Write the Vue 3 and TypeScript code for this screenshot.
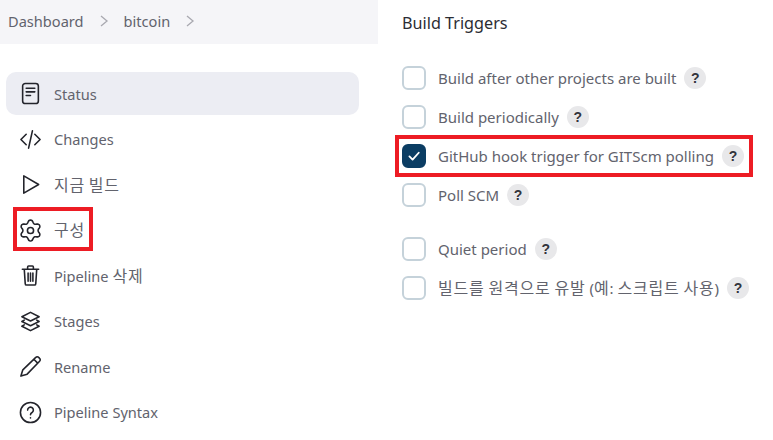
<template>
  <div class="page">
    <!-- left side: breadcrumb and task list -->
    <aside class="side">
      <div class="crumbs">
        <span>Dashboard</span>
        <svg class="sep" viewBox="0 0 10 14"><path d="M2 2l6 5-6 5" /></svg>
        <span>bitcoin</span>
        <svg class="sep" viewBox="0 0 10 14"><path d="M2 2l6 5-6 5" /></svg>
      </div>
      <nav class="tasks">
        <a v-for="t in tasks" :key="t.label" class="task" :class="{ active: t.active, marked: t.marked }">
          <svg class="ico" viewBox="0 0 24 24" v-html="t.icon"></svg>
          <span class="txt">
            <span v-for="(p, i) in pieces(t.label)" :key="i" :class="{ ko: p.ko }">{{ p.text }}</span>
          </span>
        </a>
      </nav>
    </aside>

    <main class="main">
      <h2 class="title">Build Triggers</h2>
      <div class="opts">
        <div v-for="o in options" :key="o.label" class="opt" :class="{ marked: o.checked, gap: o.gap }">
          <span class="box" :class="{ on: o.checked }">
            <svg v-if="o.checked" viewBox="0 0 24 24"><path d="M6.5 12.5l3.8 3.8 7.4-8.2" /></svg>
          </span>
          <span class="txt">
            <span v-for="(p, i) in pieces(o.label)" :key="i" :class="{ ko: p.ko }">{{ p.text }}</span>
          </span>
          <span class="help">?</span>
        </div>
      </div>
    </main>
  </div>
</template>

<script setup lang="ts">
interface Task {
  label: string
  icon: string
  active?: boolean
  marked?: boolean
}

interface Option {
  label: string
  checked?: boolean
  gap?: boolean
}

// hangul runs get their own size, the reference font sets them wider
function pieces(label: string) {
  return label
    .split(/([\uac00-\ud7a3]+)/)
    .filter((s) => s !== '')
    .map((s) => ({ text: s, ko: /[\uac00-\ud7a3]/.test(s) }))
}

// six lobed gear outline
function gearPath(): string {
  const pts: string[] = []
  for (let i = 0; i < 72; i++) {
    const a = (i / 72) * Math.PI * 2
    const wave = Math.cos(a * 6)
    const r = 9.4 + 1.5 * Math.sign(wave) * Math.pow(Math.abs(wave), 0.7)
    const x = 12 + r * Math.sin(a)
    const y = 12 - r * Math.cos(a)
    pts.push(x.toFixed(2) + ' ' + y.toFixed(2))
  }
  return 'M' + pts.join('L') + 'Z'
}

const tasks: Task[] = [
  {
    label: 'Status',
    active: true,
    icon: '<rect x="3.800" y="1.500" width="16.400" height="21" rx="2.800"/><path d="M7.500 6.500h9M7.500 10.300h9M7.500 14h4.500"/>'
  },
  { label: 'Changes', icon: '<path d="M7.5 6.5L2 12l5.5 5.5M16.5 6.5L22 12l-5.5 5.5M14 3L10 21"/>' },
  { label: '지금 빌드', icon: '<path d="M5 3v18l15.500-9z"/>' },
  {
    label: '구성',
    marked: true,
    icon: '<circle cx="12" cy="12" r="3.200"/><path d="' + gearPath() + '"/>'
  },
  {
    label: 'Pipeline 삭제',
    icon: '<path d="M3.500 5.500h17M9 5.500V3a1 1 0 0 1 1-1h4a1 1 0 0 1 1 1v2.500M5.500 5.500l1 15a1.500 1.500 0 0 0 1.500 1.500h8a1.500 1.500 0 0 0 1.500-1.500l1-15M9.500 9.500v8.500M12 9.500v8.500M14.500 9.500v8.500"/>'
  },
  {
    label: 'Stages',
    icon: '<path d="M12 2.500l9 4.500-9 4.500-9-4.500zM5.500 10.500L3 12l9 4.500L21 12l-2.500-1.500M5.500 15.500L3 17l9 4.500 9-4.500-2.500-1.500"/>'
  },
  {
    label: 'Rename',
    icon: '<path d="M2 22l2-6.500L17.500 2.500a2 2 0 0 1 3 0l1 1a2 2 0 0 1 0 3L8.500 20zM15.500 4.500l4 4"/>'
  },
  {
    label: 'Pipeline Syntax',
    icon: '<circle cx="12" cy="12" r="10.500"/><path d="M9 9.500a3 3 0 1 1 4.600 2.500c-1 .6-1.600 1.200-1.600 2.300"/><path d="M12 17.600v.1"/>'
  }
]

const options: Option[] = [
  { label: 'Build after other projects are built' },
  { label: 'Build periodically' },
  { label: 'GitHub hook trigger for GITScm polling', checked: true },
  { label: 'Poll SCM' },
  { label: 'Quiet period', gap: true },
  { label: '빌드를 원격으로 유발 (예: 스크립트 사용)' }
]
</script>

<style>
body {
  background: #fff;
}
</style>

<style scoped>
.page {
  display: flex;
  width: 773px;
  height: 440px;
  overflow: hidden;
  font-family: "Noto Sans", "Noto Sans CJK KR", sans-serif;
  font-size: 14.6px;
  color: #62636d;
}

.txt {
  line-height: 20px;
}

.ko {
  font-size: 16px;
  line-height: 1;
  letter-spacing: 0.8px;
}

.side {
  width: 378px;
  flex-shrink: 0;
}

.crumbs {
  display: flex;
  align-items: center;
  height: 44px;
  padding-left: 8px;
  padding-bottom: 3px;
  box-sizing: border-box;
  background: #f5f5f8;
}

.sep {
  width: 10px;
  height: 14px;
  margin: 0 15px;
  fill: none;
  stroke: #a9a9b0;
  stroke-width: 1.3;
}

.tasks {
  display: flex;
  flex-direction: column;
  gap: 2.500px;
  width: 353px;
  margin: 28px 0 0 6px;
}

.task {
  position: relative;
  display: flex;
  align-items: center;
  gap: 12px;
  height: 43px;
  padding-left: 13px;
  border-radius: 10px;
}

.task.active {
  background: #ecedf3;
}

.task.marked::after {
  content: "";
  position: absolute;
  left: 7px;
  top: -2px;
  width: 72px;
  height: 36px;
  border: 4px solid #ed1c24;
}

.ico {
  width: 23px;
  height: 23px;
  flex-shrink: 0;
  fill: none;
  stroke: #23242b;
  stroke-width: 1.650;
  stroke-linecap: round;
  stroke-linejoin: round;
}

.main {
  flex: 1;
  padding: 13px 0 0 24px;
}

.title {
  margin: 0 0 33px;
  font-size: 16.200px;
  font-weight: 400;
  line-height: 20px;
  color: #2b2c33;
}

.opts {
  display: flex;
  flex-direction: column;
  gap: 15px;
}

.opt {
  position: relative;
  display: flex;
  align-items: center;
  height: 24px;
  font-size: 15px;
}

.opt.gap {
  margin-top: 15px;
}

.opt.marked::after {
  content: "";
  position: absolute;
  left: -7px;
  top: -9px;
  width: 350px;
  height: 34px;
  border: 4px solid #ed1c24;
}

.box {
  display: flex;
  align-items: center;
  justify-content: center;
  width: 24px;
  height: 24px;
  box-sizing: border-box;
  margin-right: 12px;
  border: 2px solid #c5d2da;
  border-radius: 6px;
}

.box.on {
  border-color: #0b3d63;
  background: #0b3d63;
}

.box svg {
  width: 20px;
  height: 20px;
  fill: none;
  stroke: #fff;
  stroke-width: 2.200;
  stroke-linecap: round;
  stroke-linejoin: round;
}

.help {
  display: flex;
  align-items: center;
  justify-content: center;
  width: 22px;
  height: 22px;
  margin-left: 8px;
  border-radius: 50%;
  background: #e8e8ea;
  font-family: "Liberation Sans", sans-serif;
  font-size: 14px;
  font-weight: 700;
  color: #33343c;
}
</style>
